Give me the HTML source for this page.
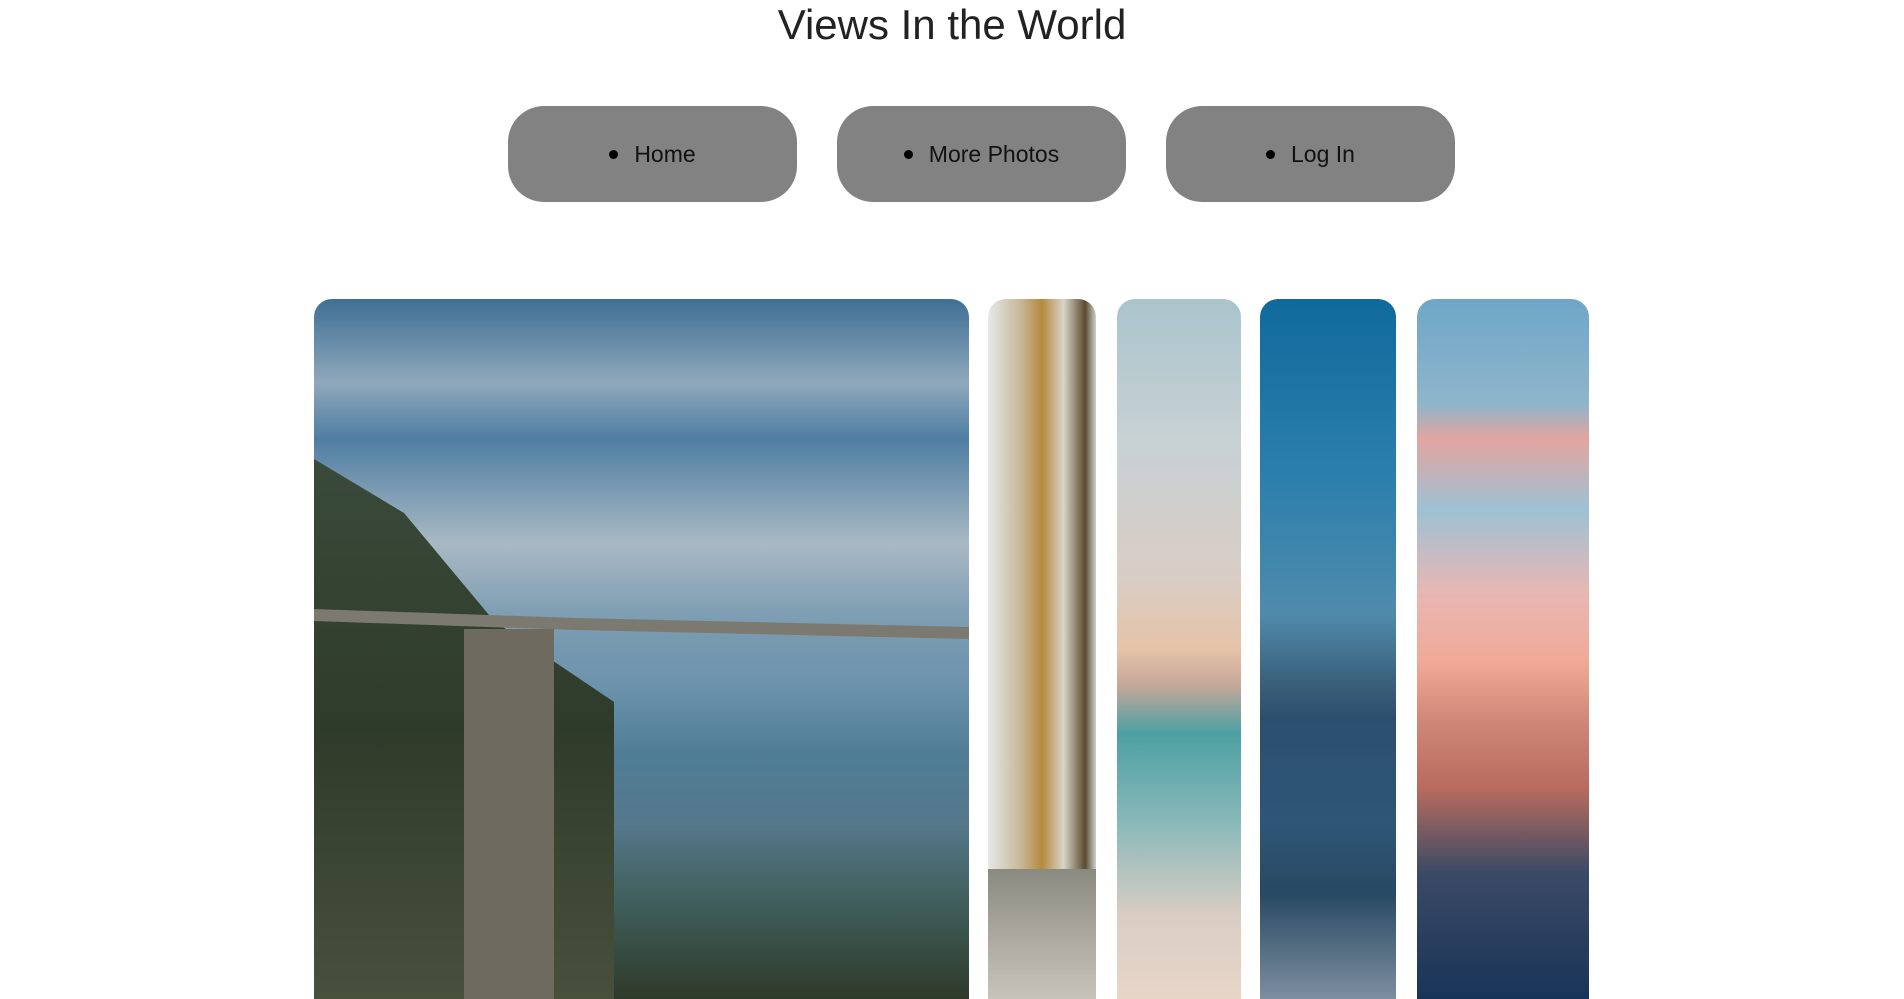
<!DOCTYPE html>
<html><head><meta charset="utf-8"><style>
html,body{margin:0;padding:0;background:#fff;width:1904px;height:961px;overflow:hidden;font-family:"Liberation Sans",sans-serif}
h1{position:absolute;top:0;left:0;width:1904px;text-align:center;margin:0;font-weight:400;font-size:42px;line-height:50px;color:#222}
.btn{position:absolute;top:106px;width:289px;height:96px;border-radius:36px;background:#828282;display:flex;align-items:center;justify-content:center;font-size:23px;color:#111}
.btn:before{content:"";width:9px;height:9px;border-radius:50%;background:#000;margin-right:16px}
.im{position:absolute;top:299px;height:700px;border-radius:18px 18px 0 0;overflow:hidden}
</style></head><body>
<h1>Views In the World</h1>
<div class="btn" style="left:508px">Home</div>
<div class="btn" style="left:837px">More Photos</div>
<div class="btn" style="left:1166px">Log In</div>
<div class="im" style="left:314px;width:655px;background:linear-gradient(180deg,#3f6f95 0%,#8fa8bb 12%,#4f7ea3 20%,#a9b9c3 35%,#7e9eb3 45%,#6d93ad 55%,#4f7d95 65%,#55788a 75%,#3d5a55 88%,#2e3a2a 100%)">
<div style="position:absolute;left:0;top:160px;width:300px;height:540px;background:linear-gradient(180deg,#3a4a3a,#2f3b2a 50%,#48503c);clip-path:polygon(0 0,30% 10%,60% 30%,100% 45%,100% 100%,0 100%)"></div>
<div style="position:absolute;left:0;top:310px;width:655px;height:30px;background:#7c7a70;clip-path:polygon(0 0,40% 30%,100% 60%,100% 100%,40% 70%,0 40%)"></div>
<div style="position:absolute;left:150px;top:330px;width:90px;height:400px;background:#6e6a60"></div>
</div>
<div class="im" style="left:988px;width:108px;background:linear-gradient(90deg,#e6e8e8,#c7b89a 30%,#b48a3e 50%,#d9d4c8 70%,#5a4a30 90%,#cfcfcf)">
<div style="position:absolute;left:0;bottom:0;width:108px;height:130px;background:linear-gradient(180deg,#8a8a80,#c8c4bc)"></div></div>
<div class="im" style="left:1117px;width:124px;background:linear-gradient(180deg,#a9c4cc 0%,#c7d1d4 20%,#d9cdc5 40%,#e5c3a8 50%,#c8a89a 55%,#4ca0a2 62%,#8ab9ba 75%,#d9cdc3 88%,#e8d6c8 100%)"></div>
<div class="im" style="left:1260px;width:136px;background:linear-gradient(180deg,#0f6a9c 0%,#2b7fad 25%,#4f8bab 45%,#3a5f7a 55%,#2c4f6e 60%,#2e5677 75%,#284962 85%,#7d8fa0 100%)"></div>
<div class="im" style="left:1417px;width:172px;background:linear-gradient(180deg,#6ea6c8 0%,#8fb5cb 15%,#e2a5a0 20%,#9ec1d4 30%,#e8b7b3 42%,#f0a996 52%,#d08878 60%,#b86b5e 70%,#3b4a66 82%,#183458 100%)"></div>
</body></html>
